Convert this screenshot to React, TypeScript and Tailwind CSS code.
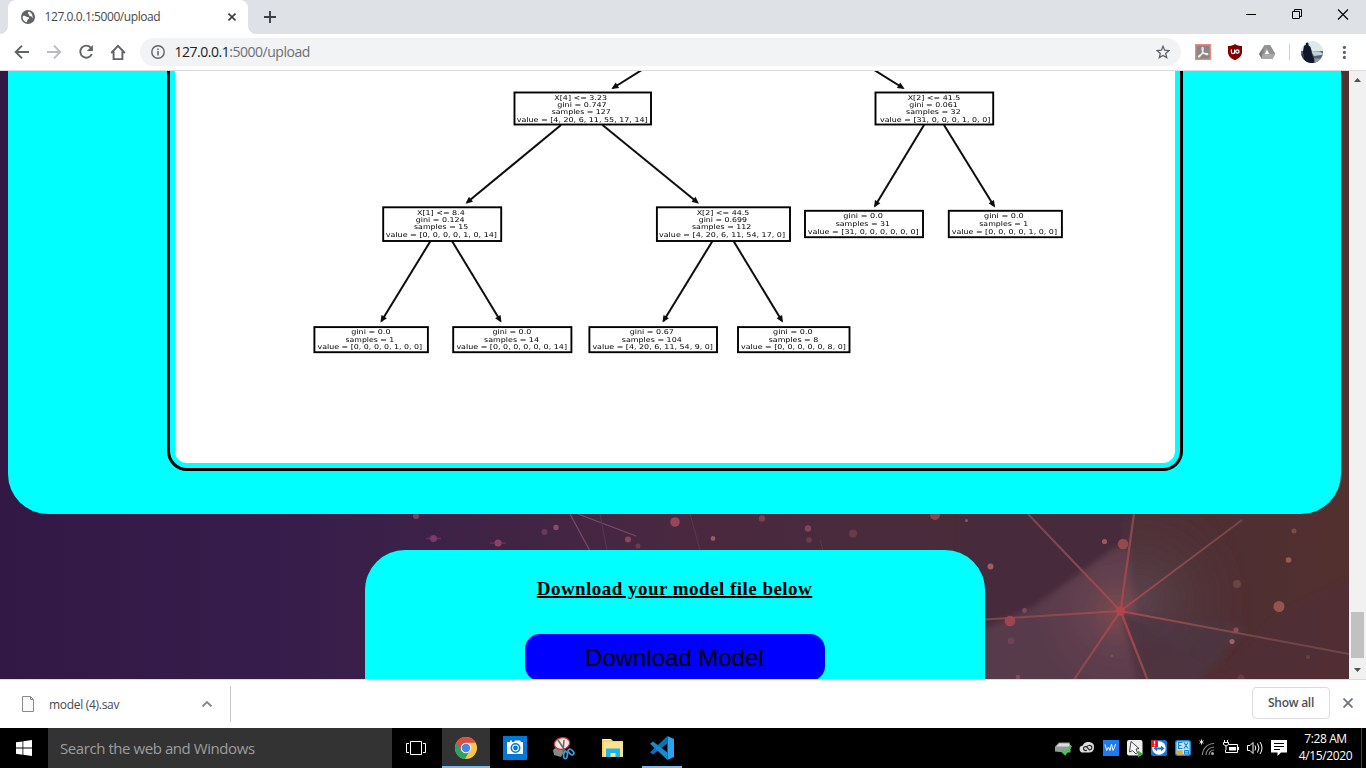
import React from "react";

type Line = [text: string, x1: number, x2: number, y: number];
type TreeNode = { box: [number, number, number, number]; lines: Line[] };

const UI = "font-['Open_Sans','Noto_Sans',sans-serif]";

const nodes: TreeNode[] = [
  { box: [514.5, 92.5, 651, 124.5], lines: [["X[4] <= 3.23", 554.3, 607, 98], ["gini = 0.747", 557.3, 606.7, 104.7], ["samples = 127", 551.7, 610.7, 112], ["value = [4, 20, 6, 11, 55, 17, 14]", 516.7, 647.7, 119.7]] },
  { box: [383.2, 207.3, 501.2, 241], lines: [["X[1] <= 8.4", 417, 464.7, 213], ["gini = 0.124", 415.7, 464.7, 219.7], ["samples = 15", 414, 468.3, 226.9], ["value = [0, 0, 0, 0, 1, 0, 14]", 385.7, 497, 234.7]] },
  { box: [656.9, 207.3, 790, 241], lines: [["X[2] <= 44.5", 696.7, 749.3, 213], ["gini = 0.699", 698.7, 747, 219.7], ["samples = 112", 692, 751.3, 226.9], ["value = [4, 20, 6, 11, 54, 17, 0]", 659, 785, 234.7]] },
  { box: [875.5, 92.5, 993.2, 124.5], lines: [["X[2] <= 41.5", 907.7, 960.3, 98], ["gini = 0.061", 909.3, 957.7, 104.7], ["samples = 32", 906, 960.7, 112], ["value = [31, 0, 0, 0, 1, 0, 0]", 880, 990.3, 119.7]] },
  { box: [805, 210.8, 923, 237.2], lines: [["gini = 0.0", 843.3, 883, 215.9], ["samples = 31", 835.7, 890, 223.5], ["value = [31, 0, 0, 0, 0, 0, 0]", 807.7, 918.7, 232]] },
  { box: [948.8, 210.8, 1061.9, 237.2], lines: [["gini = 0.0", 984, 1023.7, 215.9], ["samples = 1", 979.3, 1028.3, 223.5], ["value = [0, 0, 0, 0, 1, 0, 0]", 951.7, 1057, 232]] },
  { box: [314.4, 327.1, 427.9, 352.2], lines: [["gini = 0.0", 351.3, 390.5, 332], ["samples = 1", 345.5, 394.2, 339.5], ["value = [0, 0, 0, 0, 1, 0, 0]", 317.5, 422.2, 347]] },
  { box: [453.2, 327.1, 571.4, 352.2], lines: [["gini = 0.0", 492.4, 531.3, 332], ["samples = 14", 484, 539, 339.5], ["value = [0, 0, 0, 0, 0, 0, 14]", 456.4, 567, 347]] },
  { box: [589.4, 327.1, 717, 352.2], lines: [["gini = 0.67", 629.8, 673.8, 332], ["samples = 104", 621.8, 681.8, 339.5], ["value = [4, 20, 6, 11, 54, 9, 0]", 592.4, 713, 347]] },
  { box: [738, 327.1, 849.5, 352.2], lines: [["gini = 0.0", 773, 812.7, 332], ["samples = 8", 768.7, 818.2, 339.5], ["value = [0, 0, 0, 0, 0, 8, 0]", 741, 845.8, 347]] },
];

const edges: [number, number, number, number][] = [
  [645, 68, 613, 88],
  [871, 68, 903, 88],
  [561, 125, 467, 202.5],
  [602.5, 125, 697.5, 202.5],
  [924, 125, 875, 206],
  [944, 125, 994, 206],
  [430.5, 241, 381.5, 321],
  [452, 241, 500.5, 321],
  [712.5, 241, 663.5, 321],
  [733.5, 241, 782, 321],
];

function DecisionTree() {
  return (
    <svg className="block h-[392px] w-[1000px] rounded-b-xl bg-white" viewBox="175 71 1000 392">
      <defs>
        <marker id="head" viewBox="0 0 8 8" refX="6" refY="4" markerWidth="7.5" markerHeight="7.5" markerUnits="userSpaceOnUse" orient="auto">
          <path d="M0.5 0.6 8 4 0.5 7.4z" fill="#111" />
        </marker>
        <filter id="soft" filterUnits="userSpaceOnUse" x="175" y="61" width="1000" height="402"><feGaussianBlur stdDeviation="0.5" /></filter>
      </defs>
      <g filter="url(#soft)">
        {edges.map(([a, b, c, d], i) => (
          <line key={i} x1={a} y1={b} x2={c} y2={d} stroke="#0c0c0c" strokeWidth="2" markerEnd="url(#head)" />
        ))}
        {nodes.map(({ box: [x1, y1, x2, y2], lines }, i) => (
          <g key={i}>
            <rect x={x1} y={y1} width={x2 - x1} height={y2 - y1} fill="#fff" stroke="#050505" strokeWidth="1.9" />
            {lines.map(([t, a, b, y], j) => (
              <text key={j} x={a} y={y + 2.4} textLength={b - a} lengthAdjust="spacingAndGlyphs" fontSize="6.7" fill="#000" fontFamily="DejaVu Sans, sans-serif">
                {t}
              </text>
            ))}
          </g>
        ))}
      </g>
    </svg>
  );
}

const dots: [number, number, number, string, number][] = [
  [416, 516, 3, "#8d4a68", 0.8], [433.5, 538.5, 3.5, "#8d3f72", 0.8], [498, 543, 3.5, "#a04c70", 0.8], [544.5, 532, 3, "#80425f", 0.7], [556, 527.5, 2.7, "#a05670", 0.8],
  [628, 539.5, 3, "#9a5064", 0.8], [638, 546, 2.5, "#7e4456", 0.7], [675, 522, 4.8, "#a04c5c", 0.85], [713, 538.5, 2.4, "#a65b68", 0.9], [762, 518.5, 3.2, "#8a4654", 0.8],
  [808, 528.5, 3.2, "#8f5060", 0.8], [809, 540, 2.8, "#744150", 0.8], [853, 533.5, 4, "#774550", 0.7], [935, 515, 5, "#9a5058", 0.8], [966.5, 520.5, 1.5, "#96636c", 0.8],
  [990.5, 566.5, 3, "#a4646c", 0.9], [1104.5, 541.5, 2.6, "#a05f62", 0.9], [1123, 544, 5.3, "#9c4c50", 0.9], [1010, 621, 5.3, "#a94650", 0.9], [1024.5, 610.5, 2.4, "#8a5263", 0.8],
  [1237, 584, 4, "#73504d", 0.7], [1279, 606.5, 5.5, "#9b5a53", 0.9], [1294, 531, 2.5, "#8a5548", 0.8], [1288.5, 560, 2.8, "#a16153", 0.9], [1236, 630, 2.6, "#a05450", 0.8],
  [1232, 641.5, 2.6, "#a8656a", 0.9], [1011, 641, 3.3, "#744a5d", 0.7], [1018, 677, 2.3, "#91566a", 0.7], [1112, 656, 1.6, "#8a5562", 0.7], [1308, 657, 2.2, "#70443f", 0.8], [1241, 678, 3.5, "#70434b", 0.7],
];

function Backdrop() {
  return (
    <svg className="absolute inset-0 h-[608px] w-[1349px]" viewBox="0 71 1349 608">
      <defs>
        <linearGradient id="sky" x1="0" x2="1" y1="0" y2="0">
          <stop offset="0" stopColor="#321945" />
          <stop offset="0.2" stopColor="#351c4a" />
          <stop offset="0.31" stopColor="#3c2148" />
          <stop offset="0.5" stopColor="#492840" />
          <stop offset="0.75" stopColor="#4a2c38" />
          <stop offset="1" stopColor="#52302f" />
        </linearGradient>
        <radialGradient id="glow" gradientUnits="userSpaceOnUse" cx="1120" cy="611" r="90">
          <stop offset="0" stopColor="#87504f" stopOpacity="0.75" />
          <stop offset="0.4" stopColor="#6e4853" stopOpacity="0.5" />
          <stop offset="1" stopColor="#593b48" stopOpacity="0.1" />
        </radialGradient>
        <radialGradient id="slate" gradientUnits="userSpaceOnUse" cx="1140" cy="600" r="110">
          <stop offset="0" stopColor="#5a4550" stopOpacity="0.9" />
          <stop offset="1" stopColor="#503436" stopOpacity="0" />
        </radialGradient>
        <radialGradient id="ray" gradientUnits="userSpaceOnUse" cx="1120" cy="611" r="170">
          <stop offset="0" stopColor="#ac464e" />
          <stop offset="0.4" stopColor="#8a4a4d" />
          <stop offset="1" stopColor="#7c4f51" stopOpacity="0.7" />
        </radialGradient>
        <filter id="haze"><feGaussianBlur stdDeviation="3" /></filter>
        <filter id="focus"><feGaussianBlur stdDeviation="0.6" /></filter>
      </defs>
      <rect x="0" y="71" width="1349" height="608" fill="url(#sky)" />
      <g filter="url(#haze)">
        <path d="M960 500h171v42L1030 612l-70 20z" fill="#47293a" />
        <path d="M1120 514h229v165H1140z" fill="url(#slate)" />
        <path d="M960 640 1035 606 1115 548l14 0L1146 700H960z" fill="#593a4b" />
        <path d="M1035 606 1115 548l14 0L1146 700H1035z" fill="url(#glow)" />
        <path d="M1121 611l20 88h55l80-82 90-45v127h-110z" fill="#502c36" opacity="0.6" />
        <path d="M1121 611l27 88h38l60-72z" fill="#4d3845" opacity="0.65" />
      </g>
      <g filter="url(#focus)">
        <g stroke="url(#ray)" fill="none">
          <path d="M1120.5 611 1028 514" strokeWidth="2" />
          <path d="M1120.5 611 1134 514" strokeWidth="2.2" />
          <path d="M1120.5 611 1242 520" strokeWidth="2" />
          <path d="M1120.5 611 1349 654" strokeWidth="1.9" />
          <path d="M1120.5 611 985 619.5" strokeWidth="2.2" />
          <path d="M1120.5 611 1073 681" strokeWidth="2.2" />
          <path d="M1120.5 611 1148 681" strokeWidth="2.2" />
        </g>
        <circle cx="1120.5" cy="611" r="5" fill="#b4454e" opacity="0.75" />
        <path d="M570 514 590 551M578 514l58 22" stroke="#7a4a68" strokeWidth="1.3" fill="none" />
        <path d="M600 514l7 36M690 514l10 36M820 540l3 10" stroke="#5c394c" strokeWidth="1" fill="none" />
        {dots.map(([x, y, r, c, o], i) => (
          <circle key={i} cx={x} cy={y} r={r} fill={c} opacity={o} />
        ))}
        <path d="M426 538.6h15M490 543.1h16" stroke="#7d3c66" strokeWidth="1.5" opacity="0.6" />
      </g>
    </svg>
  );
}

function TabStrip() {
  return (
    <div className="flex h-[34px] bg-[#dee1e6]">
      <svg className="h-[34px] w-2" viewBox="0 0 8 34"><path d="M8 34V26A8 8 0 0 1 0 34z" fill="#fff" /></svg>
      <div className="flex w-[240px] items-center rounded-t-lg bg-white">
        <svg className="ml-[13px] h-[14px] w-[14px]" viewBox="0 0 14 14">
          <circle cx="7" cy="7" r="7" fill="#5f6368" />
          <path d="M1.700 6.300C3 5.600 4.300 5.800 5.200 6.600c.8.700 1.900.500 2.600.900.800.500.500 1.300-.2 1.500-.8.200-1.300.600-1.300 1.400 0 .700-.3 1.500-.9 1.900A5.500 5.500 0 0 1 1.700 6.300z" fill="#fff" />
          <path d="M8 1.600c-.8.500-1.300 1.100-1 1.800.3.600 1.100.600 1.100 1.300 0 .800.300 1.400 1.200 1.500 1 .1 1.700.4 1.800 1.200l.1 1.400A5.500 5.500 0 0 0 8 1.600z" fill="#fff" />
        </svg>
        <span className={`${UI} ml-[9.500px] grow text-[12px] leading-[16px] tracking-[-0.42px] text-[#45494d]`}>127.0.0.1:5000/upload</span>
        <svg className="mr-[12px] h-2 w-2" viewBox="0 0 8 8"><path d="M0.5 0.5l7 7M7.5 0.5l-7 7" stroke="#3c4043" strokeWidth="1.6" /></svg>
      </div>
      <svg className="h-[34px] w-2" viewBox="0 0 8 34"><path d="M0 34V26A8 8 0 0 0 8 34z" fill="#fff" /></svg>
      <svg className="mt-[11px] ml-2 h-3 w-3" viewBox="0 0 12 12"><path d="M6 0v12M0 6h12" stroke="#3c4043" strokeWidth="1.9" /></svg>
      <div className="grow" />
      <svg className="h-[34px] w-[120px]" viewBox="1246 0 120 34" fill="none" stroke="#000">
        <path d="M1246 14.5h10" />
        <path d="M1292.5 11.5h7v7h-7zM1294.5 11.5v-2h7v7h-2" />
        <path d="M1338 9.5l10 10M1348 9.5l-10 10" strokeWidth="1.1" />
      </svg>
    </div>
  );
}

function Toolbar() {
  return (
    <div className="flex h-[37px] items-center border-b border-[#dadce0] bg-white">
      <svg className="h-9 w-[140px]" viewBox="0 34 140 36" fill="none" stroke="#5f6368" strokeWidth="1.9">
        <path d="M29 52H16.5M22 45.6 15.7 52l6.3 6.4" />
        <path d="M47 52h12.5M54 45.6l6.3 6.4-6.3 6.4" stroke="#b9bbbe" />
        <path d="M90.7 47.6A6 6 0 1 0 91.8 54" />
        <path d="M92.9 45v6h-6z" fill="#5f6368" stroke="none" />
        <path d="M111.2 53 118 45.8l6.8 7.2M113.6 51.5v7.6h8.8v-7.6" />
      </svg>
      <div className="flex h-7 w-[1041px] items-center rounded-full bg-[#f1f3f4]">
        <svg className="ml-[11px] h-[14px] w-[14px]" viewBox="0 0 14 14"><circle cx="7" cy="7" r="6.2" fill="none" stroke="#5f6368" strokeWidth="1.4" /><path d="M7 6v4.6M7 3.4v1.6" stroke="#5f6368" strokeWidth="1.5" /></svg>
        <span className={`${UI} ml-[9.500px] grow text-[14px] leading-[20px] tracking-[-0.48px] text-[#6b6f74]`}><span className="text-[#202124]">127.0.0.1</span>:5000/upload</span>
        <svg className="mr-[11px] h-[14px] w-[14px]" viewBox="0 0 14 14"><path d="M7 1.300 8.600 5.200l4.300.4-3.200 2.800 1 4.200L7 10.400l-3.700 2.200 1-4.200L1.100 5.600l4.300-.4z" fill="none" stroke="#5f6368" strokeWidth="1.3" /></svg>
      </div>
      <svg className="h-9 w-[185px]" viewBox="1181 34 185 36">
        <defs>
          <clipPath id="face"><circle cx="1312" cy="52" r="11" /></clipPath>
          <linearGradient id="drive" x1="0" x2="1"><stop offset="0" stopColor="#666" /><stop offset="0.5" stopColor="#aaa" /><stop offset="1" stopColor="#838383" /></linearGradient>
        </defs>
        <rect x="1195.7" y="44.7" width="14.7" height="14.7" fill="#8a8586" stroke="#ea8a80" strokeWidth="1.4" />
        <path d="M1202.5 47.2c1.1 0 .9 2.3.2 4.1-1 2.8-2.8 5.8-4 5.8-1.2-.2.9-2.5 3.1-3.2 2.4-.8 6.2-.8 6.1.4-.1 1.1-2.8.3-4.5-1.6-1.5-1.6-2-5.5-.9-5.5z" fill="none" stroke="#eee" strokeWidth="1.1" />
        <path d="M1235 44c2 1.5 4.5 2 7 2v6c0 4-3 6.500-7 8.300-4-1.800-7-4.300-7-8.300v-6c2.500 0 5-.5 7-2z" fill="#800000" />
        <path d="M1231.400 49.400v2.700q0 1.600 1.600 1.600t1.600-1.600v-2.700M1234.600 49.400v4.300" stroke="#fff" strokeWidth="1.2" fill="none" />
        <circle cx="1237.400" cy="51.500" r="1.700" stroke="#fff" strokeWidth="1.200" fill="none" />
        <path d="M1264.500 45h5.500l5.200 9-2.800 5h-10.600l-2.800-5z" fill="url(#drive)" />
        <path d="M1264.500 45l5.400 9h5.300l-5.200-9z" fill="#929292" />
        <path d="M1262.500 54h12.700l-2.800 5h-10.600z" fill="#aaa" />
        <path d="M1267 49.800l2.500 4.200h-4.800z" fill="#fff" />
        <path d="M1289.500 44v16" stroke="#cfd1d4" />
        <g clipPath="url(#face)">
          <path d="M1300 40h24v24h-24z" fill="#dce9e9" />
          <path d="M1300 51h24v13h-24z" fill="#566070" />
          <path d="M1311 51l9 .5 4 3-10 1.500z" fill="#c3d0d9" />
          <path d="M1313 58.500h11v5.500h-11z" fill="#8e9ba8" />
          <path d="M1303 64V51l1-5 2-1.500-.2-1.500q1.800-1.500 2.800.7l-.2 1.500 2 1.500 1.200 4 .2 3 2.600 6v3z" fill="#12162b" />
          <path d="M1300 54h4v10h-4z" fill="#333d4e" />
        </g>
        <g fill="#5f6368"><circle cx="1344.400" cy="47.400" r="1.600" /><circle cx="1344.400" cy="52.400" r="1.600" /><circle cx="1344.400" cy="57.400" r="1.600" /></g>
      </svg>
    </div>
  );
}

function Page() {
  return (
    <div className="flex h-[608px]">
      <main className="relative h-[608px] w-[1349px] overflow-hidden">
        <Backdrop />
        <div className="relative flex flex-col items-center">
          <section className="flex h-[443px] w-[1333px] justify-center rounded-b-[40px] bg-[cyan]">
            <div className="h-[400px] w-[1016px] rounded-b-[20px] border-x-[3px] border-b-[3px] border-black px-[5px] pb-[5px]">
              <DecisionTree />
            </div>
          </section>
          <section className="mt-9 flex h-[200px] w-[620px] flex-col items-center rounded-t-[40px] bg-[cyan]">
            <h3 className="mt-[27px] font-['Liberation_Serif',serif] text-[19px] leading-[23px] font-bold tracking-[0.47px] whitespace-nowrap underline decoration-2">Download your model file below</h3>
            <button className="mt-[34px] h-[47px] w-[300px] rounded-[15px] bg-[blue] font-['Liberation_Sans',sans-serif] text-[24px] leading-[27px] text-black">Download Model</button>
          </section>
        </div>
      </main>
      <div className="flex w-[17px] flex-col items-center bg-[#f1f1f1]">
        <svg className="h-[17px] w-[17px]" viewBox="0 0 17 17"><path d="M5 11h7L8.500 7z" fill="#505050" /></svg>
        <div className="mt-[524px] h-[46px] w-[13px] bg-[#c1c1c1]" />
        <svg className="mt-auto h-[17px] w-[17px]" viewBox="0 0 17 17"><path d="M5 6h7L8.500 10z" fill="#505050" /></svg>
      </div>
    </div>
  );
}

function DownloadShelf() {
  return (
    <div className="flex h-[49px] items-center border-t border-[#dadce0] bg-white">
      <svg className="ml-[22px] h-4 w-3" viewBox="0 0 12 16"><path d="M.5.5h8l3 3v12H.5z" fill="#fafafa" stroke="#8a8a8a" /><path d="M8.500.5v3h3" fill="none" stroke="#8a8a8a" /></svg>
      <span className={`${UI} ml-[15px] w-[152px] pt-[2px] text-[12px] leading-[16px] tracking-[-0.3px] text-[#45494d]`}>model (4).sav</span>
      <svg className="h-[6px] w-[12px]" viewBox="0 0 12 6"><path d="M1.500 5.500 6 1l4.500 4.500" fill="none" stroke="#80868b" strokeWidth="1.800" /></svg>
      <div className="ml-[17px] h-9 w-px bg-[#c6c8cb]" />
      <div className="grow" />
      <button className={`${UI} mb-[2px] h-8 w-[78px] rounded border border-[#dadce0] text-[12px] leading-[16px] font-semibold tracking-[-0.25px] text-[#4d5156]`}>Show all</button>
      <svg className="mr-[13px] mb-[2px] ml-[13px] h-[10px] w-[10px]" viewBox="0 0 10 10"><path d="M.5.5l9 9M9.500.5l-9 9" stroke="#6f7378" strokeWidth="1.800" /></svg>
    </div>
  );
}

function TaskIcons() {
  return (
    <svg className="h-10 w-[310px]" viewBox="392 728 310 40">
      <path d="M442 728h48v40h-48z" fill="#333" />
      <path d="M442 766h48v2h-48zM642 766h40v2h-40z" fill="#76b9ed" />
      <g fill="none" stroke="#fff" strokeWidth="1"><path d="M410.500 741.500h11v13h-11zM409 743.500h-2.500v9h2.500M423 743.500h2.500v9h-2.500" /></g>
      <circle cx="466" cy="748" r="11" fill="#fbc647" />
      <path d="M456.400 742.600A11 11 0 0 0 465 759l5.100-9-4.100-2z" fill="#34a060" />
      <path d="M456.500 742.500A11 11 0 0 1 475.600 742.800H466L461.500 751z" fill="#dc4e41" />
      <circle cx="466" cy="748" r="5.300" fill="#f2f2f2" /><circle cx="466" cy="748" r="4.200" fill="#4285f4" />
      <path d="M503 736h24v24h-24z" fill="#0078d7" />
      <path d="M507 742h3v-1.500h2v1.500h2l1-1.500h5l1 1.500h2v12h-16z" fill="#fff" />
      <circle cx="515.500" cy="748" r="4.200" fill="#fff" stroke="#0078d7" strokeWidth="1.600" /><circle cx="515.500" cy="748" r="2.400" fill="#0078d7" />
      <path d="M553 750c2-3 6-4 9-3l3 3-4 7-7-2z" fill="#888" />
      <ellipse cx="562" cy="743.500" rx="7.800" ry="5.800" transform="rotate(-12 562 743.500)" fill="#f3eaea" stroke="#d12a32" strokeWidth="1.300" />
      <path d="M558 740l8 12M564 740l-1 12" stroke="#666" strokeWidth="1.500" />
      <g fill="none" stroke="#3d9cd6" strokeWidth="1.700"><ellipse cx="565.500" cy="755" rx="1.900" ry="3.600" transform="rotate(8 565.500 755)" /><ellipse cx="571" cy="752" rx="2" ry="3.500" transform="rotate(-45 571 752)" /></g>
      <path d="M602 739h9l2 2h10v16h-21z" fill="#f6d56a" /><path d="M604 742h19v14h-19z" fill="#fde391" /><path d="M603.500 739.500h7" stroke="#fff" />
      <path d="M606 757v-8.500h14v8.500h-4.500v-4h-5v4z" fill="#1fb4e8" />
      <path d="M667.500 736 674 739v18l-6.500 3z" fill="#2aa4ec" />
      <path d="M667.500 736v7.500L653 754.500l-3-2.300z" fill="#0a70b8" />
      <path d="M667.500 760v-7.500L653 741.500l-3 2.300z" fill="#168bd2" />
    </svg>
  );
}

function Tray() {
  return (
    <svg className="h-10 w-[240px]" viewBox="1050 728 240 40">
      <path d="M1055 746.500l4-4h10.500l1 4v6h-5l-10.500-1z" fill="#999" /><path d="M1056.500 746.500l3-3h9.500l.7 3z" fill="#ddd" />
      <path d="M1061.500 750l3.500 3.500 6-8" fill="none" stroke="#44c753" strokeWidth="2.800" />
      <path d="M1083.500 752.500a3.500 3.500 0 0 1-.8-7A5.800 5 0 0 1 1094 747.500c0 3.200-2 5-5 5z" fill="#ddd" />
      <g fill="none" stroke="#222" strokeWidth="1.200"><path d="M1087 750l-1 .5a2 2 0 1 1 .5-3.700l3 3a2.200 2.200 0 1 0-.5-4.300q-1.500 0-2.500 1.500" /></g>
      <path d="M1103 740h16v16h-16z" fill="#1e7af0" /><path d="M1105 744.500l1.700 6 1.800-3.500 1.500 3.500 1.500-6.500 1.500 6.500 1.500-3 1-3.500" fill="none" stroke="#fff" strokeWidth="1" />
      <rect x="1127" y="740" width="15.500" height="15.500" rx="2" fill="#eee" />
      <path d="M1131 741.500l-1.500 10.500 3-1.500 3.500 3.500 1.500-1-1.500-4 3-.5z" fill="#fff" stroke="#333" strokeWidth=".9" /><path d="M1138 750.500l5 3.500-5 3.500z" fill="#35b03e" />
      <rect x="1151" y="740" width="16" height="16" rx="2" fill="#1875d1" /><circle cx="1159" cy="748" r="6.800" fill="#fff" />
      <path d="M1153.500 748.500l3.500-2.700v1.700h4v-1.700l3.500 2.700-3.500 2.700v-1.700h-4v1.700z" fill="#1875d1" /><path d="M1151 740h7v7h-7z" fill="#e31b1b" /><path d="M1154.500 741v3.200M1154.500 745v1.200" stroke="#fff" strokeWidth="1.300" />
      <rect x="1175.700" y="740.700" width="14.600" height="14.600" rx="2" fill="#bfe3f7" stroke="#1386d3" strokeWidth="1.500" />
      <path d="M1182.500 742.500h-4v6h4M1178.500 745.500h3M1184 742.500l4 6M1188 742.500l-4 6" fill="none" stroke="#1386d3" strokeWidth="1.200" />
      <path d="M1176.500 750.500q3-.5 6 0v4q-4 1-6-.5z" fill="#efa72c" /><path d="M1184.500 750.500h4v3.500h-4zM1184 752.200h5" fill="none" stroke="#1386d3" />
      <path d="M1201.500 739.500v5M1199.500 740.700l4 2.600M1203.500 740.700l-4 2.600" stroke="#fff" strokeWidth=".9" />
      <g fill="none" stroke="#888" strokeWidth="1.100"><path d="M1202.500 755a11.500 11.500 0 0 1 11.500-11.500M1206 755a8 8 0 0 1 8-8M1209 755a5 5 0 0 1 5-5" /></g><circle cx="1212.500" cy="753.500" r="1.500" fill="#aaa" />
      <g fill="none" stroke="#fff" strokeWidth="1">
        <path d="M1229 744.500h8.500v8h-12v-2.500M1238.500 747v3" /><path d="M1224.500 740v2M1227.500 740v2M1223.500 742.500h5v2q-2.500 3-5 0zM1226 746v4" />
        <path d="M1229 747h7v3.500h-7z" fill="#fff" stroke="none" />
        <path d="M1247.500 745.500h2.500l3-3v11l-3-3h-2.500zM1255 745.500q1.500 2.500 0 5M1257.500 743.500q3 4.500 0 9M1260 742q4 6 0 12" />
      </g>
      <path d="M1271 740h16v12.500h-6l-3.500 3.500v-3.500h-6.500z" fill="#fff" /><path d="M1274 743.500h10M1274 746.500h10M1274 749.500h6" stroke="#000" strokeWidth="1" />
    </svg>
  );
}

function Taskbar() {
  return (
    <div className="flex h-10 bg-black">
      <svg className="h-10 w-12" viewBox="0 0 48 40"><path d="M16 14.300l6.500-.9v6.200H16zM23.300 13.300 32 12v7.600h-8.700zM16 20.400h6.500v6.300l-6.500-.9zM23.300 20.400H32V28l-8.700-1.200z" fill="#fff" /></svg>
      <div className={`${UI} flex w-[344px] items-center bg-[#333] pl-3 text-[15px] tracking-[-0.43px] text-[#9d9d9d]`}>Search the web and Windows</div>
      <TaskIcons />
      <div className="grow" />
      <Tray />
      <div className={`${UI} flex w-[71px] flex-col items-center pt-[2px] text-[12px] leading-[17px] tracking-[-0.38px] text-white`}>
        <span>7:28 AM</span>
        <span>4/15/2020</span>
      </div>
      <div className="w-[5px] border-l border-[#444]" />
    </div>
  );
}

export default function App() {
  return (
    <div className="flex h-[768px] w-[1366px] flex-col overflow-hidden bg-white">
      <TabStrip />
      <Toolbar />
      <Page />
      <DownloadShelf />
      <Taskbar />
    </div>
  );
}
